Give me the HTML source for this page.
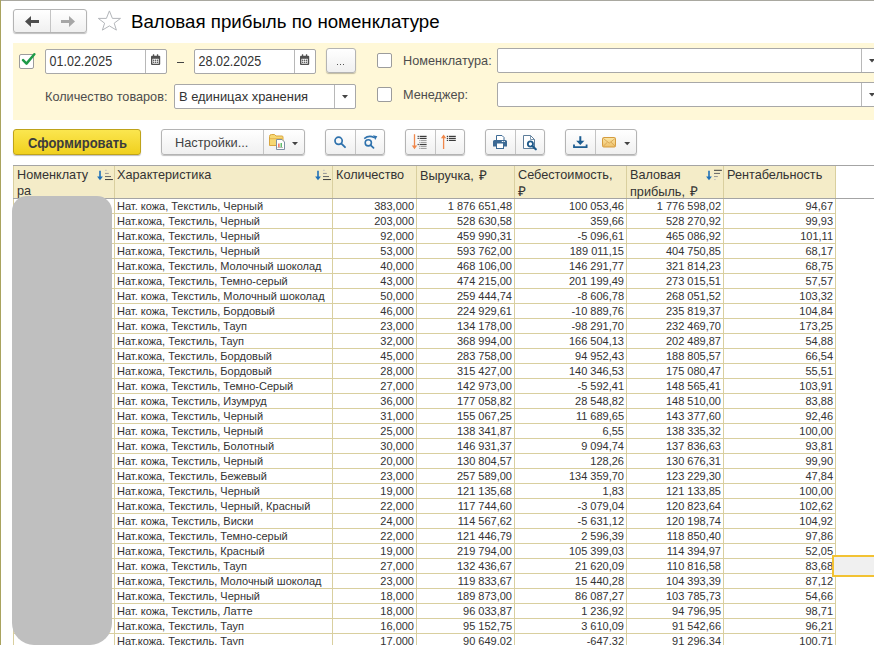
<!DOCTYPE html>
<html><head><meta charset="utf-8">
<style>
:root{--hdr:#f4ecc8;--grid:#d9cf9f;}
*{margin:0;padding:0;box-sizing:border-box}
html,body{width:874px;height:645px;overflow:hidden;background:#fff;font-family:"Liberation Sans",sans-serif;color:#333}
.a{position:absolute}
.win-l{position:absolute;left:0;top:0;width:1px;height:645px;background:#a9a35f}
.win-t{position:absolute;left:0;top:0;width:874px;height:1px;background:#a9a8a0}
.btn{position:absolute;border:1px solid #b4b4b4;border-radius:3px;background:linear-gradient(#fff,#f0f0f0);box-shadow:0 1px 1px rgba(0,0,0,.25)}
.div{position:absolute;top:0;bottom:0;width:1px;background:#c4c4c4}
.panel{position:absolute;left:13px;top:43px;width:861px;height:77px;background:#fff8d8}
.cb{position:absolute;width:15px;height:15px;border:1px solid #9c9c9c;border-radius:2px;background:#fff}
.inp{position:absolute;border:1px solid #a8a8a8;border-radius:2px;background:#fff}
.lbl{position:absolute;font-size:12.7px;color:#4d4d4d;white-space:nowrap}
.vl{position:absolute;width:1px;background:var(--grid)}
.hl{position:absolute;left:13px;width:823px;height:1px;background:var(--grid)}
.gl{position:absolute;left:13px;width:861px;height:1px;background:#a4a4a4}
.c{position:absolute;font-size:11px;line-height:14px;height:14px;white-space:nowrap;color:#333}
.h{position:absolute;font-size:12.7px;line-height:15.5px;white-space:nowrap;color:#333}
</style></head><body>
<div class="win-t"></div>
<div class="win-l"></div>

<!-- nav buttons -->
<div class="btn" style="left:13px;top:9px;width:74px;height:24px">
  <div class="div" style="left:36px"></div>

</div>
<svg class="a" style="left:0;top:0" width="90" height="40" viewBox="0 0 90 40"><path d="M25 21.5 L31 16 V20.1 H39 V22.9 H31 V27 Z" fill="#4d4d4d"/><path d="M75 21.5 L69 16 V20.1 H61 V22.9 H69 V27 Z" fill="#a6a6a6"/></svg>
<!-- star -->
<svg class="a" style="left:90px;top:5px" width="40" height="32" viewBox="90 5 40 32"><path d="M109.4 10.9 L112.4 18.4 L120.5 18.4 L114.2 23.2 L116.4 30.1 L109.4 25.9 L102.4 30.1 L104.6 23.2 L98.3 18.4 L106.4 18.4 Z" fill="none" stroke="#b3b6ba" stroke-width="1" stroke-linejoin="round"/></svg>
<div class="a" style="left:131px;top:11px;font-size:18.7px;color:#000;white-space:nowrap">Валовая прибыль по номенклатуре</div>

<!-- filter panel -->
<div class="panel"></div>
<div class="cb" style="left:19px;top:54px"></div>
<svg class="a" style="left:20px;top:52px" width="16" height="14" viewBox="0 0 16 14"><path d="M3.1 8.2 L6.5 11.6 L14.3 2.3" fill="none" stroke="#1d9a47" stroke-width="2.5" stroke-linecap="round" stroke-linejoin="round"/></svg>

<div class="inp" style="left:45px;top:49px;width:122px;height:25px">
  <div class="div" style="left:99px;background:#b8b8b8"></div>
  <div class="a" style="left:3.6px;top:3px;font-size:12.5px;color:#333;transform:scaleY(1.15);transform-origin:0 0">01.02.2025</div>
</div>
<div class="a" style="left:177px;top:62px;width:7px;height:1px;background:#444"></div>
<div class="inp" style="left:194px;top:49px;width:122px;height:25px">
  <div class="div" style="left:99px;background:#b8b8b8"></div>
  <div class="a" style="left:3.6px;top:3px;font-size:12.5px;color:#333;transform:scaleY(1.15);transform-origin:0 0">28.02.2025</div>
</div>
<svg class="a" style="left:0;top:40px" width="320" height="40" viewBox="0 40 320 40"><g transform="translate(0,0)"><rect x="151" y="55.8" width="9.2" height="9.2" rx="1" fill="#505050"/><rect x="152.4" y="58.8" width="6.4" height="4.9" fill="#fff"/><g fill="#505050"><circle cx="153.7" cy="60.3" r="0.75"/><circle cx="155.6" cy="60.3" r="0.75"/><circle cx="157.5" cy="60.3" r="0.75"/><circle cx="153.7" cy="62.3" r="0.75"/><circle cx="155.6" cy="62.3" r="0.75"/><circle cx="157.5" cy="62.3" r="0.75"/><rect x="152.9" y="54.3" width="1.3" height="2.6"/><rect x="156.9" y="54.3" width="1.3" height="2.6"/></g></g><g transform="translate(149,0)"><rect x="151" y="55.8" width="9.2" height="9.2" rx="1" fill="#505050"/><rect x="152.4" y="58.8" width="6.4" height="4.9" fill="#fff"/><g fill="#505050"><circle cx="153.7" cy="60.3" r="0.75"/><circle cx="155.6" cy="60.3" r="0.75"/><circle cx="157.5" cy="60.3" r="0.75"/><circle cx="153.7" cy="62.3" r="0.75"/><circle cx="155.6" cy="62.3" r="0.75"/><circle cx="157.5" cy="62.3" r="0.75"/><rect x="152.9" y="54.3" width="1.3" height="2.6"/><rect x="156.9" y="54.3" width="1.3" height="2.6"/></g></g></svg>
<div class="btn" style="left:326px;top:48px;width:30px;height:25px">
  <div class="a" style="left:10px;top:15px;width:1px;height:1px;background:#555"></div><div class="a" style="left:13px;top:15px;width:1px;height:1px;background:#555"></div><div class="a" style="left:16px;top:15px;width:1px;height:1px;background:#555"></div>
</div>

<div class="cb" style="left:377px;top:53px"></div>
<div class="lbl" style="left:403px;top:54px">Номенклатура:</div>
<div class="inp" style="left:497px;top:48px;width:390px;height:25px">
  <div class="div" style="left:363px;background:#b8b8b8"></div>
  <svg class="a" style="left:371px;top:10px" width="6" height="4" viewBox="0 0 6 4"><path d="M0 0H6L3 3.5Z" fill="#444"/></svg>
</div>

<div class="lbl" style="left:45px;top:90px">Количество товаров:</div>
<div class="inp" style="left:174px;top:84px;width:182px;height:25px">
  <div class="div" style="left:159px;background:#b8b8b8"></div>
  <div class="a" style="left:4px;top:4px;font-size:12.9px;color:#333;white-space:nowrap">В единицах хранения</div>
  <svg class="a" style="left:166.5px;top:10px" width="6" height="4" viewBox="0 0 6 4"><path d="M0 0H6L3 3.5Z" fill="#444"/></svg>
</div>
<div class="cb" style="left:377px;top:87px"></div>
<div class="lbl" style="left:403px;top:88px">Менеджер:</div>
<div class="inp" style="left:497px;top:82px;width:390px;height:25px">
  <div class="div" style="left:363px;background:#b8b8b8"></div>
  <svg class="a" style="left:371px;top:10px" width="6" height="4" viewBox="0 0 6 4"><path d="M0 0H6L3 3.5Z" fill="#444"/></svg>
</div>

<!-- toolbar -->
<div class="a" style="left:13px;top:129px;width:128px;height:26px;border:1px solid #bfa31a;border-radius:3px;background:linear-gradient(#fbe64f,#f0d01e);box-shadow:0 1px 1px rgba(0,0,0,.25)">
  <div class="a" style="left:14px;top:4.5px;font-size:13px;font-weight:bold;color:#3c3c3c;white-space:nowrap;transform:scaleY(1.12);transform-origin:0 0">Сформировать</div>
</div>
<div class="btn" style="left:161px;top:129px;width:144px;height:26px">
  <div class="div" style="left:101px"></div>
  <div class="a" style="left:13px;top:5px;font-size:12.8px;color:#444;white-space:nowrap">Настройки...</div>
</div>
<div class="btn" style="left:325px;top:129px;width:60px;height:26px"><div class="div" style="left:29px"></div></div>
<div class="btn" style="left:405px;top:129px;width:60px;height:26px"><div class="div" style="left:29px"></div></div>
<div class="btn" style="left:485px;top:129px;width:60px;height:26px"><div class="div" style="left:29px"></div></div>
<div class="btn" style="left:565px;top:129px;width:72px;height:26px"><div class="div" style="left:29px"></div></div>
<!-- toolbar icons (page coords) -->
<svg class="a" style="left:0;top:120px" width="660" height="40" viewBox="0 120 660 40">
  <!-- folder -->
  <path d="M269.5 136.5 Q269.5 134.5 271.5 134.5 H274.5 L276 136 H282 Q283 136 283 137 V145.5 H269.5 Z" fill="#f6d874" stroke="#d9a640" stroke-width="1"/>
  <rect x="270" y="138" width="12.5" height="1.2" fill="#e9bb52"/>
  <!-- doc -->
  <path d="M276.5 139.5 H282 L284.5 142 V149.5 H276.5 Z" fill="#fff" stroke="#7d8fa3" stroke-width="1"/>
  <rect x="278.3" y="143.5" width="1.2" height="3.8" fill="#e84a3a"/>
  <rect x="280.6" y="143" width="1.2" height="4.3" fill="#3cae4c"/>
  <rect x="277.5" y="147.3" width="5.5" height="0.6" fill="#999"/>
  <path d="M292 142 H298 L295 145.2 Z" fill="#444"/>
  <!-- search -->
  <circle cx="338.6" cy="140.8" r="3.6" fill="none" stroke="#2f72ad" stroke-width="1.7"/>
  <path d="M341.4 143.6 L345 147.2" stroke="#2f72ad" stroke-width="1.9" stroke-linecap="round"/>
  <!-- search refresh -->
  <circle cx="368.3" cy="142.8" r="3.1" fill="none" stroke="#2f72ad" stroke-width="1.6"/>
  <path d="M370.6 145.1 L373.5 147.8" stroke="#2f72ad" stroke-width="1.8" stroke-linecap="round"/>
  <path d="M364.2 138.6 Q369 134.8 374.2 137.6" fill="none" stroke="#2f72ad" stroke-width="1.6"/>
  <path d="M373 135.2 L377.3 136.3 L375.2 140 Z" fill="#2f72ad"/>
  <!-- sort desc -->
  <path d="M414.5 134.2 V147" stroke="#f0874a" stroke-width="1.3"/>
  <path d="M411.8 145.6 H417.2 L414.5 149.2 Z" fill="#f0874a"/>
  <g fill="#3c3c3c"><rect x="417.6" y="135.8" width="1.2" height="1.2"/><rect x="419.6" y="135.8" width="7" height="1.2"/><rect x="417.6" y="137.8" width="1.2" height="1.2"/><rect x="419.6" y="137.8" width="7" height="1.2"/><rect x="417.6" y="143.9" width="1.2" height="1.2"/><rect x="419.6" y="143.9" width="7" height="1.2"/></g>
  <g fill="#9a9a9a"><rect x="419.2" y="139.9" width="1" height="1"/><rect x="420.6" y="139.9" width="6" height="1"/><rect x="419.2" y="141.9" width="1" height="1"/><rect x="420.6" y="141.9" width="6" height="1"/><rect x="419.2" y="145.9" width="1" height="1"/><rect x="420.6" y="145.9" width="6" height="1"/><rect x="419.2" y="147.9" width="1" height="1"/><rect x="420.6" y="147.9" width="6" height="1"/></g>
  <!-- sort asc -->
  <path d="M443.6 137 V149" stroke="#f0874a" stroke-width="1.3"/>
  <path d="M440.9 138.2 H446.3 L443.6 134.4 Z" fill="#f0874a"/>
  <g fill="#3c3c3c"><rect x="446.8" y="135.8" width="1.2" height="1.2"/><rect x="448.8" y="135.8" width="7" height="1.2"/><rect x="446.8" y="137.8" width="1.2" height="1.2"/><rect x="448.8" y="137.8" width="7" height="1.2"/><rect x="446.8" y="139.8" width="1.2" height="1.2"/><rect x="448.8" y="139.8" width="7" height="1.2"/></g>
  <!-- printer -->
  <path d="M496.5 140 V135.5 H502 L504 137.5 V140" fill="#fff" stroke="#3d6a94" stroke-width="1"/>
  <path d="M493 141.5 Q493 140 494.5 140 H505.5 Q507 140 507 141.5 V146.5 H504 V143 H496 V146.5 H493 Z" fill="#3d6a94"/>
  <rect x="496.5" y="143" width="7" height="5.5" fill="#fff" stroke="#3d6a94" stroke-width="1"/>
  <rect x="503.6" y="141" width="1.2" height="1" fill="#fff"/><rect x="501.8" y="141" width="1.2" height="1" fill="#fff"/>
  <!-- preview -->
  <path d="M523.5 135.5 H530.5 L534.5 139.5 V148.5 H523.5 Z" fill="#fff" stroke="#5d7d9a" stroke-width="1"/>
  <path d="M530.5 135.5 V139.5 H534.5" fill="none" stroke="#5d7d9a" stroke-width="0.8"/>
  <circle cx="530.4" cy="144" r="2.6" fill="#fff" stroke="#1f5a8a" stroke-width="1.8"/>
  <path d="M532.3 146 L535.8 149.3" stroke="#1f5a8a" stroke-width="2.2" stroke-linecap="round"/>
  <!-- download -->
  <path d="M580.3 136.2 V142" stroke="#1d5d92" stroke-width="2"/>
  <path d="M576.2 140.8 H584.4 L580.3 145 Z" fill="#1d5d92"/>
  <path d="M574 144.5 V147.2 H586.6 V144.5" fill="none" stroke="#1d5d92" stroke-width="1.8"/>
  <!-- envelope -->
  <defs><linearGradient id="env" x1="0" y1="0" x2="0" y2="1"><stop offset="0" stop-color="#fbe7a6"/><stop offset="1" stop-color="#eec06a"/></linearGradient></defs>
  <rect x="602.5" y="137.5" width="13" height="9.5" rx="1.2" fill="url(#env)" stroke="#d49b3e" stroke-width="1"/>
  <path d="M603.2 138.3 L609.2 143.2 L615.3 138.3 M603.2 146.3 L607.4 142.2 M615.3 146.3 L611 142.2" fill="none" stroke="#d8a452" stroke-width="0.9"/>
  <path d="M624.2 142 H630.2 L627.2 145.2 Z" fill="#444"/>
</svg>
<!-- table -->
<div style="position:absolute;left:13px;top:165px;width:822px;height:33px;background:var(--hdr)"></div>
<div class="vl" style="left:13px;top:165px;height:480px"></div>
<div class="vl" style="left:114px;top:165px;height:480px"></div>
<div class="vl" style="left:332px;top:165px;height:480px"></div>
<div class="vl" style="left:416px;top:165px;height:480px"></div>
<div class="vl" style="left:514px;top:165px;height:480px"></div>
<div class="vl" style="left:626px;top:165px;height:480px"></div>
<div class="vl" style="left:723px;top:165px;height:480px"></div>
<div class="vl" style="left:835px;top:165px;height:480px"></div>
<div class="hl" style="top:213px"></div>
<div class="hl" style="top:228px"></div>
<div class="hl" style="top:243px"></div>
<div class="hl" style="top:258px"></div>
<div class="hl" style="top:273px"></div>
<div class="hl" style="top:288px"></div>
<div class="hl" style="top:303px"></div>
<div class="hl" style="top:318px"></div>
<div class="hl" style="top:333px"></div>
<div class="hl" style="top:348px"></div>
<div class="hl" style="top:363px"></div>
<div class="hl" style="top:378px"></div>
<div class="hl" style="top:393px"></div>
<div class="hl" style="top:408px"></div>
<div class="hl" style="top:423px"></div>
<div class="hl" style="top:438px"></div>
<div class="hl" style="top:453px"></div>
<div class="hl" style="top:468px"></div>
<div class="hl" style="top:483px"></div>
<div class="hl" style="top:498px"></div>
<div class="hl" style="top:513px"></div>
<div class="hl" style="top:528px"></div>
<div class="hl" style="top:543px"></div>
<div class="hl" style="top:558px"></div>
<div class="hl" style="top:573px"></div>
<div class="hl" style="top:588px"></div>
<div class="hl" style="top:603px"></div>
<div class="hl" style="top:618px"></div>
<div class="hl" style="top:633px"></div>
<div class="gl" style="top:165px"></div>
<div class="gl" style="top:198px"></div>
<div class="c" style="left:117px;top:199px">Нат. кожа, Текстиль, Черный</div>
<div class="c r" style="right:460px;top:199px">383,000</div>
<div class="c r" style="right:362px;top:199px">1&nbsp;876&nbsp;651,48</div>
<div class="c r" style="right:250px;top:199px">100&nbsp;053,46</div>
<div class="c r" style="right:153px;top:199px">1&nbsp;776&nbsp;598,02</div>
<div class="c r" style="right:41px;top:199px">94,67</div>
<div class="c" style="left:117px;top:214px">Нат.кожа, Текстиль, Черный</div>
<div class="c r" style="right:460px;top:214px">203,000</div>
<div class="c r" style="right:362px;top:214px">528&nbsp;630,58</div>
<div class="c r" style="right:250px;top:214px">359,66</div>
<div class="c r" style="right:153px;top:214px">528&nbsp;270,92</div>
<div class="c r" style="right:41px;top:214px">99,93</div>
<div class="c" style="left:117px;top:229px">Нат.кожа, Текстиль, Черный</div>
<div class="c r" style="right:460px;top:229px">92,000</div>
<div class="c r" style="right:362px;top:229px">459&nbsp;990,31</div>
<div class="c r" style="right:250px;top:229px">-5&nbsp;096,61</div>
<div class="c r" style="right:153px;top:229px">465&nbsp;086,92</div>
<div class="c r" style="right:41px;top:229px">101,11</div>
<div class="c" style="left:117px;top:244px">Нат.кожа, Текстиль, Черный</div>
<div class="c r" style="right:460px;top:244px">53,000</div>
<div class="c r" style="right:362px;top:244px">593&nbsp;762,00</div>
<div class="c r" style="right:250px;top:244px">189&nbsp;011,15</div>
<div class="c r" style="right:153px;top:244px">404&nbsp;750,85</div>
<div class="c r" style="right:41px;top:244px">68,17</div>
<div class="c" style="left:117px;top:259px">Нат.кожа, Текстиль, Молочный шоколад</div>
<div class="c r" style="right:460px;top:259px">40,000</div>
<div class="c r" style="right:362px;top:259px">468&nbsp;106,00</div>
<div class="c r" style="right:250px;top:259px">146&nbsp;291,77</div>
<div class="c r" style="right:153px;top:259px">321&nbsp;814,23</div>
<div class="c r" style="right:41px;top:259px">68,75</div>
<div class="c" style="left:117px;top:274px">Нат.кожа, Текстиль, Темно-серый</div>
<div class="c r" style="right:460px;top:274px">43,000</div>
<div class="c r" style="right:362px;top:274px">474&nbsp;215,00</div>
<div class="c r" style="right:250px;top:274px">201&nbsp;199,49</div>
<div class="c r" style="right:153px;top:274px">273&nbsp;015,51</div>
<div class="c r" style="right:41px;top:274px">57,57</div>
<div class="c" style="left:117px;top:289px">Нат. кожа, Текстиль, Молочный шоколад</div>
<div class="c r" style="right:460px;top:289px">50,000</div>
<div class="c r" style="right:362px;top:289px">259&nbsp;444,74</div>
<div class="c r" style="right:250px;top:289px">-8&nbsp;606,78</div>
<div class="c r" style="right:153px;top:289px">268&nbsp;051,52</div>
<div class="c r" style="right:41px;top:289px">103,32</div>
<div class="c" style="left:117px;top:304px">Нат. кожа, Текстиль, Бордовый</div>
<div class="c r" style="right:460px;top:304px">46,000</div>
<div class="c r" style="right:362px;top:304px">224&nbsp;929,61</div>
<div class="c r" style="right:250px;top:304px">-10&nbsp;889,76</div>
<div class="c r" style="right:153px;top:304px">235&nbsp;819,37</div>
<div class="c r" style="right:41px;top:304px">104,84</div>
<div class="c" style="left:117px;top:319px">Нат. кожа, Текстиль, Тауп</div>
<div class="c r" style="right:460px;top:319px">23,000</div>
<div class="c r" style="right:362px;top:319px">134&nbsp;178,00</div>
<div class="c r" style="right:250px;top:319px">-98&nbsp;291,70</div>
<div class="c r" style="right:153px;top:319px">232&nbsp;469,70</div>
<div class="c r" style="right:41px;top:319px">173,25</div>
<div class="c" style="left:117px;top:334px">Нат.кожа, Текстиль, Тауп</div>
<div class="c r" style="right:460px;top:334px">32,000</div>
<div class="c r" style="right:362px;top:334px">368&nbsp;994,00</div>
<div class="c r" style="right:250px;top:334px">166&nbsp;504,13</div>
<div class="c r" style="right:153px;top:334px">202&nbsp;489,87</div>
<div class="c r" style="right:41px;top:334px">54,88</div>
<div class="c" style="left:117px;top:349px">Нат.кожа, Текстиль, Бордовый</div>
<div class="c r" style="right:460px;top:349px">45,000</div>
<div class="c r" style="right:362px;top:349px">283&nbsp;758,00</div>
<div class="c r" style="right:250px;top:349px">94&nbsp;952,43</div>
<div class="c r" style="right:153px;top:349px">188&nbsp;805,57</div>
<div class="c r" style="right:41px;top:349px">66,54</div>
<div class="c" style="left:117px;top:364px">Нат.кожа, Текстиль, Бордовый</div>
<div class="c r" style="right:460px;top:364px">28,000</div>
<div class="c r" style="right:362px;top:364px">315&nbsp;427,00</div>
<div class="c r" style="right:250px;top:364px">140&nbsp;346,53</div>
<div class="c r" style="right:153px;top:364px">175&nbsp;080,47</div>
<div class="c r" style="right:41px;top:364px">55,51</div>
<div class="c" style="left:117px;top:379px">Нат. кожа, Текстиль, Темно-Серый</div>
<div class="c r" style="right:460px;top:379px">27,000</div>
<div class="c r" style="right:362px;top:379px">142&nbsp;973,00</div>
<div class="c r" style="right:250px;top:379px">-5&nbsp;592,41</div>
<div class="c r" style="right:153px;top:379px">148&nbsp;565,41</div>
<div class="c r" style="right:41px;top:379px">103,91</div>
<div class="c" style="left:117px;top:394px">Нат. кожа, Текстиль, Изумруд</div>
<div class="c r" style="right:460px;top:394px">36,000</div>
<div class="c r" style="right:362px;top:394px">177&nbsp;058,82</div>
<div class="c r" style="right:250px;top:394px">28&nbsp;548,82</div>
<div class="c r" style="right:153px;top:394px">148&nbsp;510,00</div>
<div class="c r" style="right:41px;top:394px">83,88</div>
<div class="c" style="left:117px;top:409px">Нат. кожа, Текстиль, Черный</div>
<div class="c r" style="right:460px;top:409px">31,000</div>
<div class="c r" style="right:362px;top:409px">155&nbsp;067,25</div>
<div class="c r" style="right:250px;top:409px">11&nbsp;689,65</div>
<div class="c r" style="right:153px;top:409px">143&nbsp;377,60</div>
<div class="c r" style="right:41px;top:409px">92,46</div>
<div class="c" style="left:117px;top:424px">Нат. кожа, Текстиль, Черный</div>
<div class="c r" style="right:460px;top:424px">25,000</div>
<div class="c r" style="right:362px;top:424px">138&nbsp;341,87</div>
<div class="c r" style="right:250px;top:424px">6,55</div>
<div class="c r" style="right:153px;top:424px">138&nbsp;335,32</div>
<div class="c r" style="right:41px;top:424px">100,00</div>
<div class="c" style="left:117px;top:439px">Нат. кожа, Текстиль, Болотный</div>
<div class="c r" style="right:460px;top:439px">30,000</div>
<div class="c r" style="right:362px;top:439px">146&nbsp;931,37</div>
<div class="c r" style="right:250px;top:439px">9&nbsp;094,74</div>
<div class="c r" style="right:153px;top:439px">137&nbsp;836,63</div>
<div class="c r" style="right:41px;top:439px">93,81</div>
<div class="c" style="left:117px;top:454px">Нат. кожа, Текстиль, Черный</div>
<div class="c r" style="right:460px;top:454px">20,000</div>
<div class="c r" style="right:362px;top:454px">130&nbsp;804,57</div>
<div class="c r" style="right:250px;top:454px">128,26</div>
<div class="c r" style="right:153px;top:454px">130&nbsp;676,31</div>
<div class="c r" style="right:41px;top:454px">99,90</div>
<div class="c" style="left:117px;top:469px">Нат.кожа, Текстиль, Бежевый</div>
<div class="c r" style="right:460px;top:469px">23,000</div>
<div class="c r" style="right:362px;top:469px">257&nbsp;589,00</div>
<div class="c r" style="right:250px;top:469px">134&nbsp;359,70</div>
<div class="c r" style="right:153px;top:469px">123&nbsp;229,30</div>
<div class="c r" style="right:41px;top:469px">47,84</div>
<div class="c" style="left:117px;top:484px">Нат.кожа, Текстиль, Черный</div>
<div class="c r" style="right:460px;top:484px">19,000</div>
<div class="c r" style="right:362px;top:484px">121&nbsp;135,68</div>
<div class="c r" style="right:250px;top:484px">1,83</div>
<div class="c r" style="right:153px;top:484px">121&nbsp;133,85</div>
<div class="c r" style="right:41px;top:484px">100,00</div>
<div class="c" style="left:117px;top:499px">Нат.кожа, Текстиль, Черный, Красный</div>
<div class="c r" style="right:460px;top:499px">22,000</div>
<div class="c r" style="right:362px;top:499px">117&nbsp;744,60</div>
<div class="c r" style="right:250px;top:499px">-3&nbsp;079,04</div>
<div class="c r" style="right:153px;top:499px">120&nbsp;823,64</div>
<div class="c r" style="right:41px;top:499px">102,62</div>
<div class="c" style="left:117px;top:514px">Нат. кожа, Текстиль, Виски</div>
<div class="c r" style="right:460px;top:514px">24,000</div>
<div class="c r" style="right:362px;top:514px">114&nbsp;567,62</div>
<div class="c r" style="right:250px;top:514px">-5&nbsp;631,12</div>
<div class="c r" style="right:153px;top:514px">120&nbsp;198,74</div>
<div class="c r" style="right:41px;top:514px">104,92</div>
<div class="c" style="left:117px;top:529px">Нат.кожа, Текстиль, Темно-серый</div>
<div class="c r" style="right:460px;top:529px">22,000</div>
<div class="c r" style="right:362px;top:529px">121&nbsp;446,79</div>
<div class="c r" style="right:250px;top:529px">2&nbsp;596,39</div>
<div class="c r" style="right:153px;top:529px">118&nbsp;850,40</div>
<div class="c r" style="right:41px;top:529px">97,86</div>
<div class="c" style="left:117px;top:544px">Нат.кожа, Текстиль, Красный</div>
<div class="c r" style="right:460px;top:544px">19,000</div>
<div class="c r" style="right:362px;top:544px">219&nbsp;794,00</div>
<div class="c r" style="right:250px;top:544px">105&nbsp;399,03</div>
<div class="c r" style="right:153px;top:544px">114&nbsp;394,97</div>
<div class="c r" style="right:41px;top:544px">52,05</div>
<div class="c" style="left:117px;top:559px">Нат. кожа, Текстиль, Тауп</div>
<div class="c r" style="right:460px;top:559px">27,000</div>
<div class="c r" style="right:362px;top:559px">132&nbsp;436,67</div>
<div class="c r" style="right:250px;top:559px">21&nbsp;620,09</div>
<div class="c r" style="right:153px;top:559px">110&nbsp;816,58</div>
<div class="c r" style="right:41px;top:559px">83,68</div>
<div class="c" style="left:117px;top:574px">Нат.кожа, Текстиль, Молочный шоколад</div>
<div class="c r" style="right:460px;top:574px">23,000</div>
<div class="c r" style="right:362px;top:574px">119&nbsp;833,67</div>
<div class="c r" style="right:250px;top:574px">15&nbsp;440,28</div>
<div class="c r" style="right:153px;top:574px">104&nbsp;393,39</div>
<div class="c r" style="right:41px;top:574px">87,12</div>
<div class="c" style="left:117px;top:589px">Нат.кожа, Текстиль, Черный</div>
<div class="c r" style="right:460px;top:589px">18,000</div>
<div class="c r" style="right:362px;top:589px">189&nbsp;873,00</div>
<div class="c r" style="right:250px;top:589px">86&nbsp;087,27</div>
<div class="c r" style="right:153px;top:589px">103&nbsp;785,73</div>
<div class="c r" style="right:41px;top:589px">54,66</div>
<div class="c" style="left:117px;top:604px">Нат. кожа, Текстиль, Латте</div>
<div class="c r" style="right:460px;top:604px">18,000</div>
<div class="c r" style="right:362px;top:604px">96&nbsp;033,87</div>
<div class="c r" style="right:250px;top:604px">1&nbsp;236,92</div>
<div class="c r" style="right:153px;top:604px">94&nbsp;796,95</div>
<div class="c r" style="right:41px;top:604px">98,71</div>
<div class="c" style="left:117px;top:619px">Нат.кожа, Текстиль, Тауп</div>
<div class="c r" style="right:460px;top:619px">16,000</div>
<div class="c r" style="right:362px;top:619px">95&nbsp;152,75</div>
<div class="c r" style="right:250px;top:619px">3&nbsp;610,09</div>
<div class="c r" style="right:153px;top:619px">91&nbsp;542,66</div>
<div class="c r" style="right:41px;top:619px">96,21</div>
<div class="c" style="left:117px;top:634px">Нат.кожа, Текстиль, Тауп</div>
<div class="c r" style="right:460px;top:634px">17,000</div>
<div class="c r" style="right:362px;top:634px">90&nbsp;649,02</div>
<div class="c r" style="right:250px;top:634px">-647,32</div>
<div class="c r" style="right:153px;top:634px">91&nbsp;296,34</div>
<div class="c r" style="right:41px;top:634px">100,71</div>
<div class="h" style="left:17px;top:168px">Номенклату<br>ра</div>
<div class="h" style="left:117px;top:168px">Характеристика</div>
<div class="h" style="left:336px;top:168px">Количество</div>
<div class="h" style="left:420px;top:168px">Выручка,<span style="margin-left:5px;font-size:13.5px">₽</span></div>
<div class="h" style="left:518px;top:168px">Себестоимость,<br><span style="font-size:13.5px">₽</span></div>
<div class="h" style="left:630px;top:168px">Валовая<br>прибыль,<span style="margin-left:5px;font-size:13.5px">₽</span></div>
<div class="h" style="left:727px;top:168px">Рентабельность</div>

<svg class="a" style="left:0;top:160px" width="874" height="30" viewBox="0 160 874 30"><path d="M100 170.8 V177.2" stroke="#1f70b8" stroke-width="1.6"/><path d="M97.1 176.6 H102.9 L100 180.2 Z" fill="#1f70b8"/><rect x="105" y="169.8" width="1.8" height="1.05" fill="#c4c4c4"/><rect x="105" y="172.9" width="3.8" height="1.05" fill="#9a9a9a"/><rect x="105" y="176.0" width="6" height="1.05" fill="#6a6a6a"/><rect x="105" y="179.0" width="7.9" height="1.05" fill="#444"/><path d="M318 170.8 V177.2" stroke="#1f70b8" stroke-width="1.6"/><path d="M315.1 176.6 H320.9 L318 180.2 Z" fill="#1f70b8"/><rect x="323" y="169.8" width="1.8" height="1.05" fill="#c4c4c4"/><rect x="323" y="172.9" width="3.8" height="1.05" fill="#9a9a9a"/><rect x="323" y="176.0" width="6" height="1.05" fill="#6a6a6a"/><rect x="323" y="179.0" width="7.9" height="1.05" fill="#444"/><path d="M709 170.8 V177.2" stroke="#1f70b8" stroke-width="1.6"/><path d="M706.1 176.6 H711.9 L709 180.2 Z" fill="#1f70b8"/><rect x="714" y="169.8" width="7.9" height="1.05" fill="#444"/><rect x="714" y="172.9" width="6" height="1.05" fill="#6a6a6a"/><rect x="714" y="176.0" width="3.8" height="1.05" fill="#9a9a9a"/><rect x="714" y="179.0" width="1.8" height="1.05" fill="#c4c4c4"/></svg>
<!-- redaction -->
<div class="a" style="left:12px;top:196px;width:100px;height:449px;background:#bfbfbf;border-radius:15px 15px 22px 22px"></div>
<!-- selected cell -->
<div class="a" style="left:832px;top:555px;width:46px;height:22px;border:2px solid #f2c233;background:#f0f0f0"></div>
</body></html>
